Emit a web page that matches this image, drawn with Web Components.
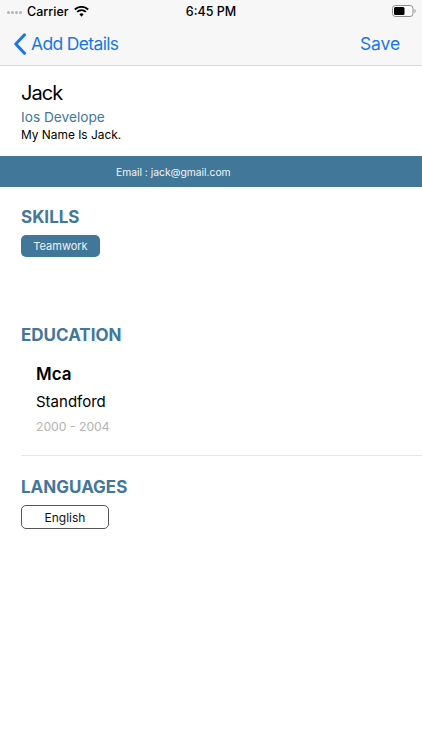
<!DOCTYPE html>
<html>
<head>
<meta charset="utf-8">
<style>
  html, body { margin: 0; padding: 0; background: #fff; }
  body { font-family: Inter, "Liberation Sans", sans-serif; width: 422px; height: 750px; overflow: hidden; }
</style>
</head>
<body>
<app-nav back="Add Details" action="Save"></app-nav>
<profile-head name="Jack" role="Ios Develope" bio="My Name Is Jack."></profile-head>
<contact-band>Email : jack@gmail.com</contact-band>
<cv-section heading="SKILLS" style="--top:19px;--gap:7px;height:124px">
  <cv-tag kind="filled">Teamwork</cv-tag>
</cv-section>
<cv-section heading="EDUCATION" style="--top:13px;--gap:16px">
  <edu-item degree="Mca" school="Standford" years="2000 - 2004"></edu-item>
  <cv-rule></cv-rule>
</cv-section>
<cv-section heading="LANGUAGES" style="--top:20px;--gap:7px">
  <cv-tag kind="outline">English</cv-tag>
</cv-section>

<script>
class AppNav extends HTMLElement {
  connectedCallback() {
    this.attachShadow({ mode: 'open' });
    this.shadowRoot.innerHTML = `
      <style>
        :host { display: block; height: 66px; box-sizing: border-box; background: #f7f7f7; border-bottom: 1px solid #d9d9d9; }
        .status { height: 22px; display: grid; grid-template-columns: 1fr auto 1fr; align-items: center; font-size: 12.500px; font-weight: 500; color: #000; }
        .left { display: flex; align-items: center; padding-left: 7px; gap: 5px; }
        .dots { display: flex; gap: 1px; margin-top: 3px; }
        .dots i { width: 3px; height: 3px; border-radius: 50%; background: #b5b5b5; }
        .right { display: flex; justify-content: flex-end; padding-right: 6px; }
        .bar { height: 43px; display: flex; align-items: center; justify-content: space-between; padding: 0 22px 0 13px; box-sizing: border-box; font-size: 17.500px; letter-spacing: -.65px; color: #1877e6; }
        .back { display: flex; align-items: center; gap: 4px; }
        .save { letter-spacing: -.1px; }
      </style>
      <div class="status">
        <div class="left">
          <span class="dots"><i></i><i></i><i></i><i></i></span>
          <span>Carrier</span>
          <svg width="15" height="11" viewBox="0 0 16 12"><path fill="#000" d="M8 11.600 5.700 9.100a3.300 3.300 0 0 1 4.600 0zM3.900 7.200 2.500 5.700a7.900 7.900 0 0 1 11 0l-1.400 1.500a5.900 5.900 0 0 0-8.200 0zM1.400 4.600 0 3.100a11.600 11.600 0 0 1 16 0l-1.400 1.500a9.600 9.600 0 0 0-13.200 0z"/></svg>
        </div>
        <div>6:45 PM</div>
        <div class="right">
          <svg width="24" height="12" viewBox="0 0 24 12"><rect x=".5" y=".5" width="20.500" height="11" rx="3" fill="#fff" stroke="#8e8e8e"/><rect x="2" y="2" width="10.500" height="8" rx="1.500" fill="#000"/><path d="M22.500 4v4c.8-.3 1.200-1.100 1.200-2s-.4-1.700-1.200-2z" fill="#9a9a9a"/></svg>
        </div>
      </div>
      <div class="bar">
        <div class="back">
          <svg width="14" height="22" viewBox="0 0 14 22"><path d="M11.500 1.800 2.800 11l8.700 9.200" fill="none" stroke="#1877e6" stroke-width="3" stroke-linecap="round" stroke-linejoin="round"/></svg>
          <span>${this.getAttribute('back')}</span>
        </div>
        <div class="save">${this.getAttribute('action')}</div>
      </div>`;
  }
}

class ProfileHead extends HTMLElement {
  connectedCallback() {
    this.attachShadow({ mode: 'open' });
    this.shadowRoot.innerHTML = `
      <style>
        :host { display: block; height: 90px; box-sizing: border-box; padding: 14px 21px 0; }
        .name { font-size: 20px; line-height: 26px; letter-spacing: -.9px; color: #000; }
        .role { font-size: 13.700px; line-height: 18px; color: #43779a; margin-top: 2px; }
        .bio { font-size: 11.900px; line-height: 17px; color: #000; }
      </style>
      <div class="name">${this.getAttribute('name')}</div>
      <div class="role">${this.getAttribute('role')}</div>
      <div class="bio">${this.getAttribute('bio')}</div>`;
  }
}

class ContactBand extends HTMLElement {
  connectedCallback() {
    this.attachShadow({ mode: 'open' });
    this.shadowRoot.innerHTML = `
      <style>
        :host { display: flex; align-items: center; height: 31px; padding-left: 116px; background: #417798; color: #f2f6f9; font-size: 10.300px; }
      </style>
      <slot></slot>`;
  }
}

class CvSection extends HTMLElement {
  connectedCallback() {
    this.attachShadow({ mode: 'open' });
    this.shadowRoot.innerHTML = `
      <style>
        :host { display: block; box-sizing: border-box; padding: var(--top, 0) 21px 0; }
        h2 { margin: 0 0 var(--gap, 6px); font-size: 17px; line-height: 22px; font-weight: 700; color: #43779a; }
      </style>
      <h2>${this.getAttribute('heading')}</h2>
      <slot></slot>`;
  }
}

class CvTag extends HTMLElement {
  connectedCallback() {
    this.attachShadow({ mode: 'open' });
    this.shadowRoot.innerHTML = `
      <style>
        :host { display: flex; align-items: center; justify-content: center; box-sizing: border-box; border-radius: 5px; font-size: 11px; }
        :host([kind="filled"]) { width: 79px; height: 22px; background: #417798; color: #eef3f6; }
        :host([kind="outline"]) { width: 88px; height: 24px; border: 1px solid #555; color: #111; font-size: 12px; }
      </style>
      <slot></slot>`;
  }
}

class EduItem extends HTMLElement {
  connectedCallback() {
    this.attachShadow({ mode: 'open' });
    this.shadowRoot.innerHTML = `
      <style>
        :host { display: block; padding: 0 15px; }
        .degree { font-size: 17px; line-height: 24px; font-weight: 600; color: #000; }
        .school { font-size: 15px; line-height: 20px; margin-top: 6px; color: #000; }
        .years { font-size: 12.200px; line-height: 16px; margin-top: 7px; color: #b3b3b3; }
      </style>
      <div class="degree">${this.getAttribute('degree')}</div>
      <div class="school">${this.getAttribute('school')}</div>
      <div class="years">${this.getAttribute('years')}</div>`;
  }
}

class CvRule extends HTMLElement {
  connectedCallback() {
    this.attachShadow({ mode: 'open' });
    this.shadowRoot.innerHTML = `
      <style>
        :host { display: block; height: 1px; margin: 20px -21px 0 0; background: #e6e6e6; }
      </style>`;
  }
}

customElements.define('app-nav', AppNav);
customElements.define('profile-head', ProfileHead);
customElements.define('contact-band', ContactBand);
customElements.define('cv-section', CvSection);
customElements.define('cv-tag', CvTag);
customElements.define('edu-item', EduItem);
customElements.define('cv-rule', CvRule);
</script>
</body>
</html>
